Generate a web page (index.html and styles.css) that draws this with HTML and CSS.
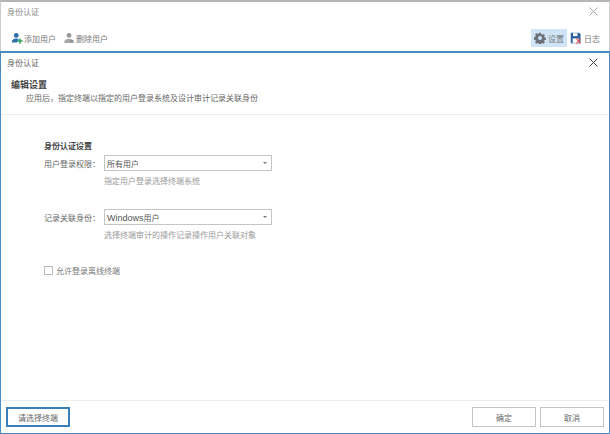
FILE: index.html
```html
<!DOCTYPE html>
<html lang="zh">
<head>
<meta charset="utf-8">
<title>身份认证</title>
<link rel="stylesheet" href="styles.css">
</head>
<body>
<div class="app">
  <div class="parent">
    <div class="parent-title"><span>身份认证</span>
      <svg class="x x-faint" viewBox="0 0 9 9"><path d="M.5.5l8 8M8.500.5l-8 8"/></svg>
    </div>
    <div class="toolbar">
      <div class="tool"><svg class="ico" viewBox="0 0 16 16"><circle cx="7" cy="4.500" r="3.200" fill="#2f6ea8"/><path d="M1 14c0-4 2.500-5.500 6-5.500 1.500 0 2.500.3 3.400.8L8 14z" fill="#2f6ea8"/><path d="M11 8.500h2v2.500h2.500v2H13v2.500h-2V13H8.500v-2H11z" fill="#2f9e5a"/></svg>添加用户</div>
      <div class="tool"><svg class="ico" viewBox="0 0 16 16"><circle cx="8" cy="4.500" r="3.200" fill="#9a9a9a"/><path d="M1.500 14.500c0-4 2.500-5.500 6.500-5.500s6.500 1.500 6.500 5.500z" fill="#a8a8a8"/><path d="M9 11h5v2H9z" fill="#8a8a8a"/></svg>删除用户</div>
      <div class="spacer"></div>
      <div class="tool tool-on"><svg class="ico" viewBox="0 0 16 16"><path d="M6.700 1h2.600l.4 2 1.400.6 1.700-1.100 1.800 1.800-1.100 1.700.6 1.400 2 .4v2.600l-2 .4-.6 1.400 1.100 1.700-1.800 1.800-1.700-1.100-1.400.6-.4 2H6.700l-.4-2-1.400-.6-1.700 1.100-1.800-1.800 1.100-1.700-.6-1.400-2-.4V6.700l2-.4.6-1.400-1.100-1.700 1.800-1.800 1.700 1.100 1.400-.6z" fill="#6a7177"/><circle cx="8" cy="8" r="2.600" fill="#cfe5f7"/></svg>设置</div>
      <div class="tool tool-log"><svg class="ico" viewBox="0 0 16 16"><path d="M1 1h11l2 2v12H1z" fill="#2a5f9e"/><path d="M4 1.500h6v4H4z" fill="#fff"/><path d="M3.500 8.500h8v6h-8z" fill="#fff"/><path d="M8 8l6 7.500M14 9l-5.500 6.500" stroke="#e2574c" stroke-width="1.500" fill="none"/></svg>日志</div>
    </div>
  </div>
  <div class="dialog">
    <div class="dialog-title"><span>身份认证</span>
      <svg class="x" viewBox="0 0 9 9"><path d="M.5.5l8 8M8.500.5l-8 8"/></svg>
    </div>
    <div class="head">
      <div class="head-title">编辑设置</div>
      <div class="head-sub">应用后，指定终端以指定的用户登录系统及设计审计记录关联身份</div>
    </div>
    <div class="form">
      <div class="section">身份认证设置</div>
      <div class="field">
        <label class="label">用户登录权限：</label>
        <div class="select"><span>所有用户</span><i class="caret"></i></div>
      </div>
      <div class="hint">指定用户登录选择终端系统</div>
      <div class="field field-2">
        <label class="label">记录关联身份：</label>
        <div class="select"><span><span class="latin">Windows</span>用户</span><i class="caret"></i></div>
      </div>
      <div class="hint">选择终端审计的操作记录操作用户关联对象</div>
      <div class="check"><i class="box"></i>允许登录离线终端</div>
    </div>
    <div class="footer">
      <div class="btn btn-primary">请选择终端</div>
      <div class="spacer"></div>
      <div class="btn">确定</div>
      <div class="btn">取消</div>
    </div>
  </div>
</div>
</body>
</html>
```
FILE: styles.css
```css
* { box-sizing: border-box; }
html, body { margin: 0; padding: 0; }
body { width: 610px; height: 434px; overflow: hidden; background: #fff;
  font-family: "Liberation Sans", "Noto Sans CJK SC", sans-serif; font-size: 8px; color: #555; }
.app { width: 610px; height: 434px; display: flex; flex-direction: column; }
.parent { height: 51px; border-top: 2px solid #b5b5b5; display: flex; flex-direction: column; flex: none;
  border-left: 1px solid #ccc; border-right: 1px solid #ccc; }
.parent-title { height: 18px; padding: 0 11px 0 6px; display: flex; justify-content: space-between; align-items: center; color: #888; }
.x { width: 9px; height: 9px; stroke: #444; stroke-width: 1; fill: none; }
.x-faint { stroke: #aaa; }
.toolbar { flex: 1; display: flex; align-items: flex-start; padding: 9px 9px 0 10px; gap: 7px; color: #777; }
.tool { height: 18px; display: flex; align-items: center; gap: 1px; white-space: nowrap; }
.ico { width: 12px; height: 12px; flex: none; }
.spacer { flex: 1; }
.tool-on { background: #cfe5f7; padding: 0 3px; gap: 2px; }
.tool-log { gap: 2px; margin-left: -4px; }
.dialog { flex: 1; display: flex; flex-direction: column; border: 1px solid #4a8bc4; border-top: 2px solid #4a8bc4; min-height: 0; }
.dialog-title { height: 18px; padding: 0 11px 0 6px; display: flex; justify-content: space-between; align-items: center; color: #666; flex: none; }
.head { height: 44px; padding: 9px 10px 0; border-bottom: 1px solid #ededed; flex: none; }
.head-title { font-weight: bold; color: #444; font-size: 9px; line-height: 11px; }
.head-sub { padding-left: 15px; margin-top: 2px; color: #666; line-height: 12px; }
.form { flex: 1; padding: 26px 0 0 43px; }
.section { font-weight: bold; color: #444; line-height: 12px; }
.field { display: flex; align-items: center; margin-top: 2px; }
.field-2 { margin-top: 21px; }
.label { width: 60px; flex: none; color: #666; white-space: nowrap; }
.select { width: 168px; height: 16px; border: 1px solid #c4c4c4; display: flex; align-items: center; justify-content: space-between; padding: 0 4px 0 2px; color: #555; }
.latin { font-size: 9px; }
.caret { width: 0; height: 0; border: 2px solid transparent; border-top-color: #777; border-bottom: 0; }
.hint { margin: 5px 0 0 60px; line-height: 12px; color: #999; }
.check { display: flex; align-items: center; height: 12px; margin-top: 22px; color: #777; gap: 3px; }
.box { width: 9px; height: 9px; border: 1px solid #bbb; background: #fff; }
.footer { height: 33px; border-top: 1px solid #ededed; display: flex; align-items: flex-start; padding: 6px 5px 0 5px; gap: 4px; flex: none; }
.btn { width: 64px; height: 20px; border: 1px solid #c4c4c4; display: flex; align-items: center; justify-content: center; color: #666; }
.btn-primary { border: 2px solid #3a7dbb; }
```
